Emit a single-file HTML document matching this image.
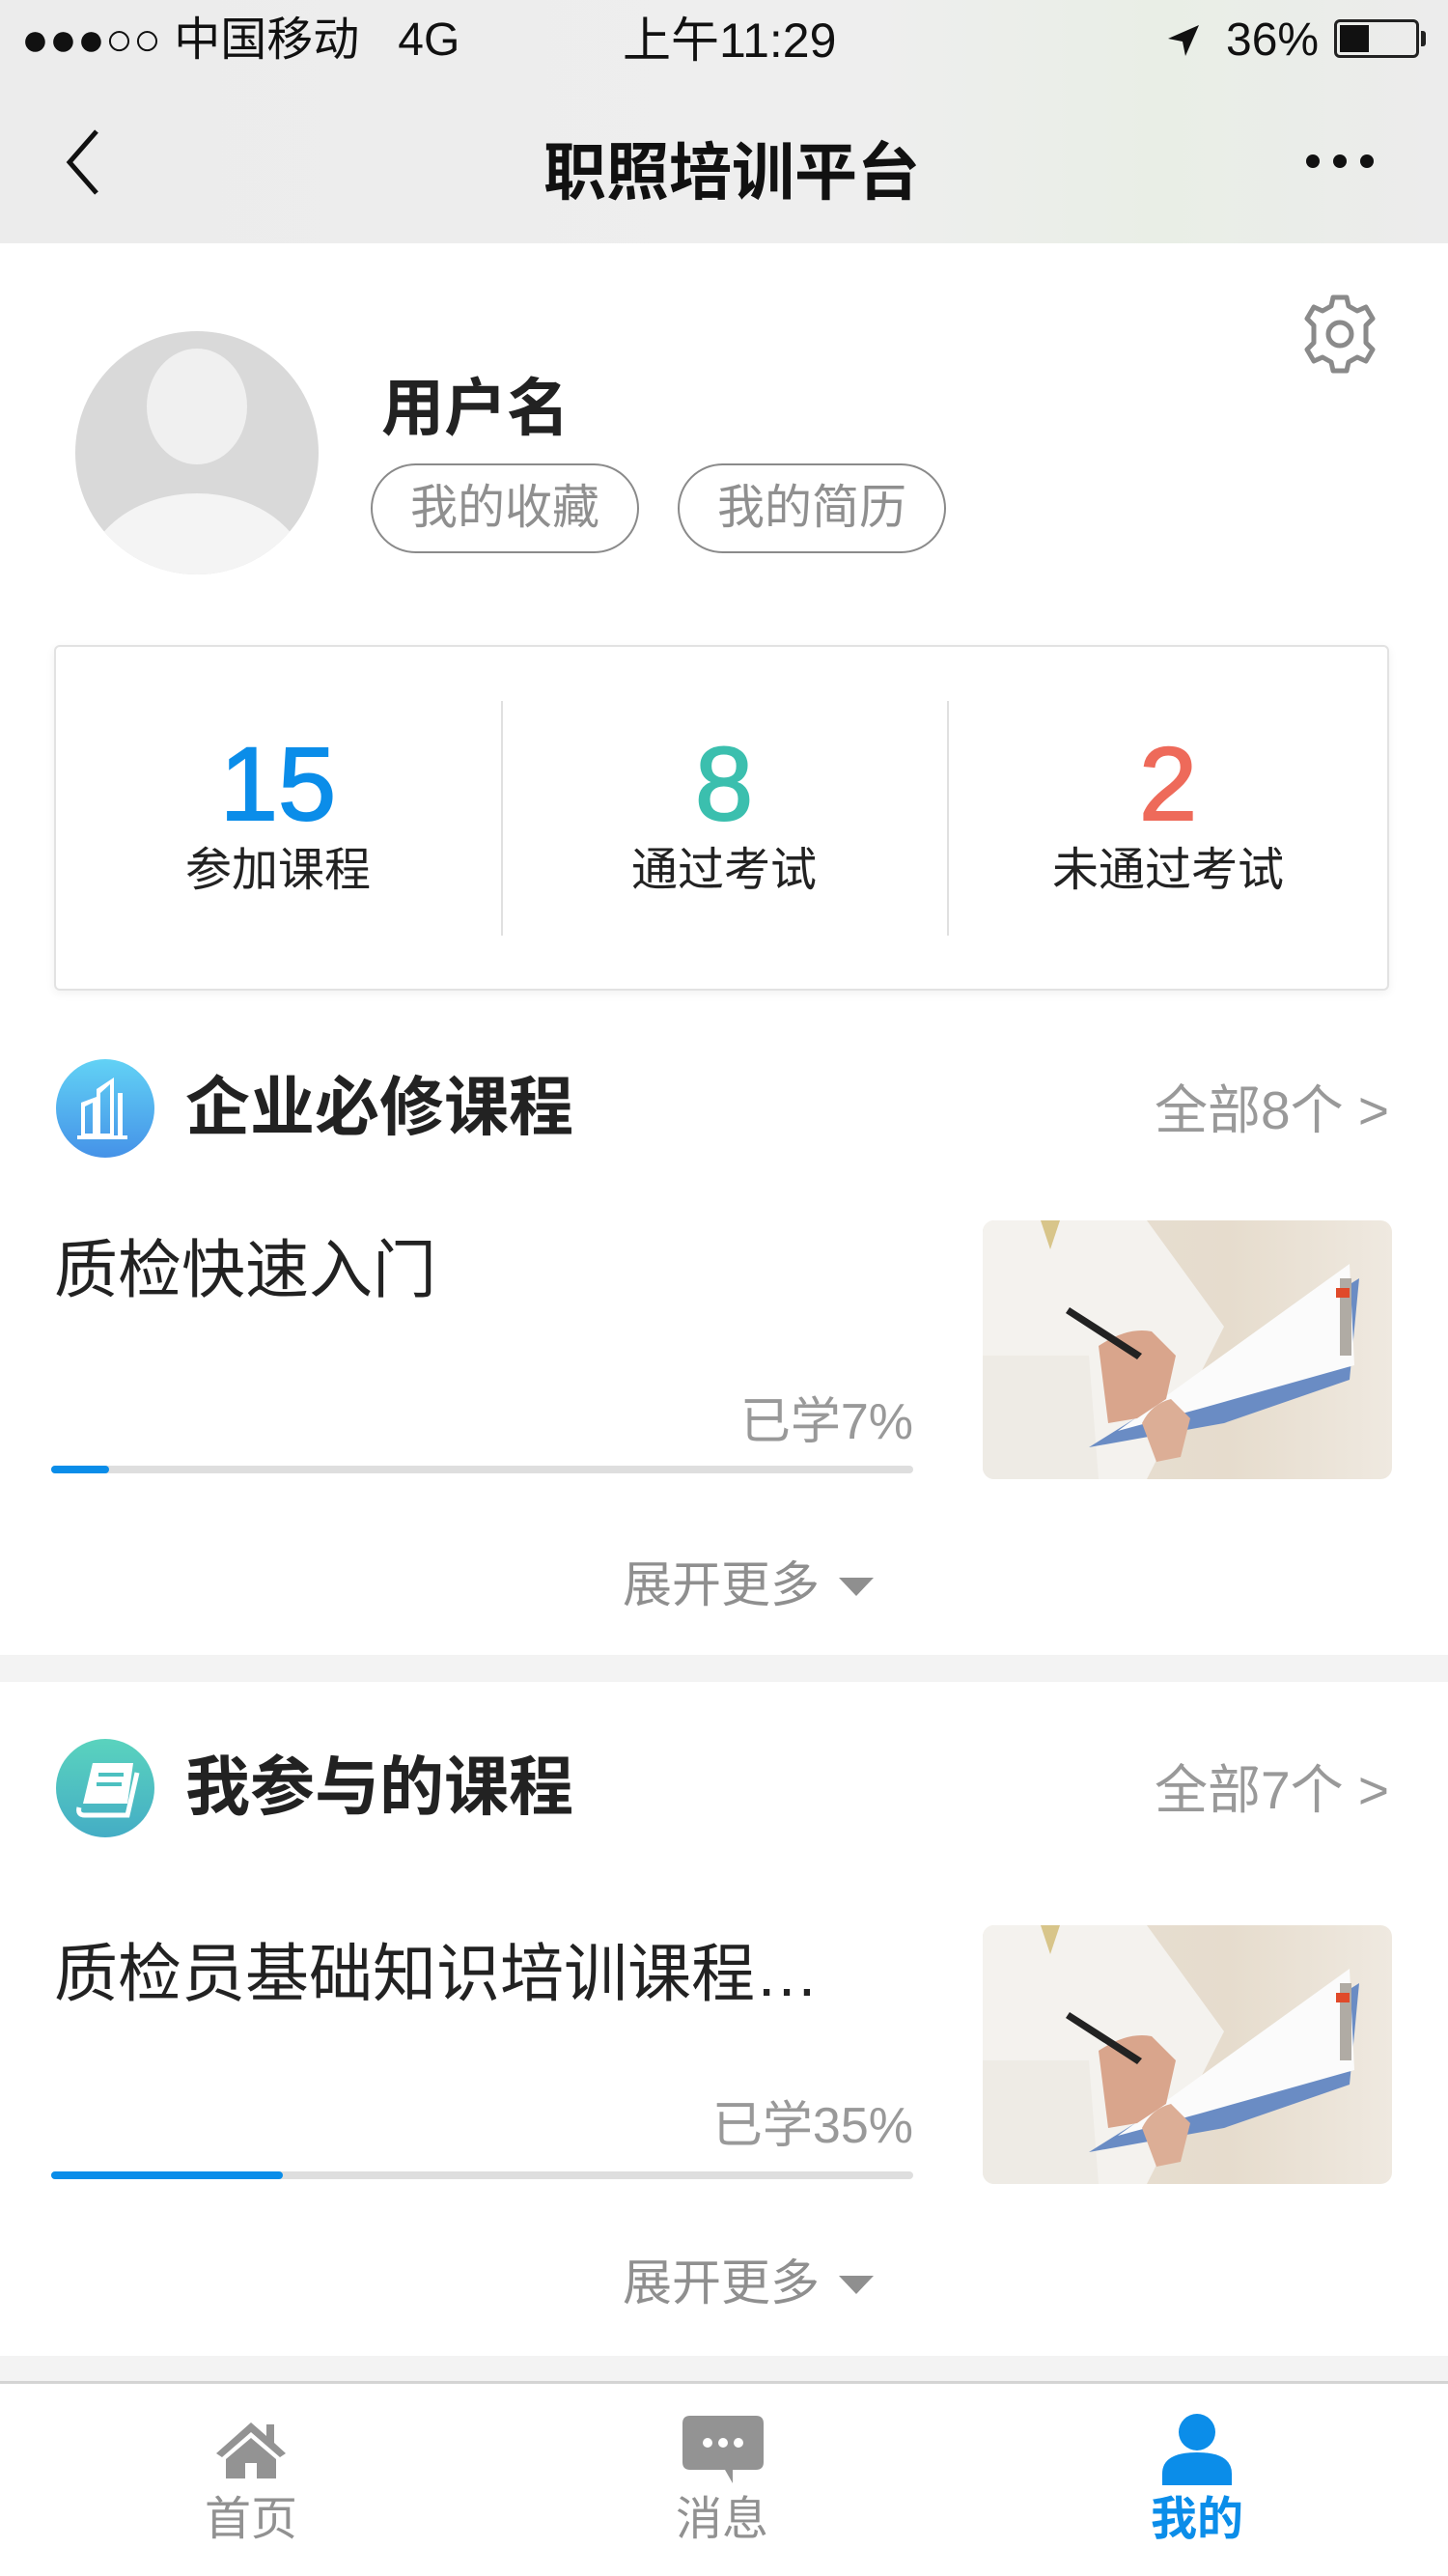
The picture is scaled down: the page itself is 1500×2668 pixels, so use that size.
<!DOCTYPE html>
<html><head><meta charset="utf-8">
<style>
*{margin:0;padding:0;box-sizing:border-box}
body{width:1500px;height:2668px;position:relative;background:#fff;font-family:"Liberation Sans","Noto Sans CJK SC",sans-serif;overflow:hidden}
.a{position:absolute;white-space:nowrap}
.hdr{position:absolute;left:0;top:0;width:1500px;height:252px;background:linear-gradient(90deg,#ececec 0%,#eeeeee 60%,#e9eee6 80%,#ececec 100%)}
.pill{position:absolute;top:480px;width:278px;height:93px;border:2px solid #8a8a8a;border-radius:47px;color:#8f8f8f;font-size:49px;line-height:89px;text-align:center}
.num{position:absolute;top:752px;width:300px;text-align:center;font-size:108px;line-height:120px;-webkit-text-stroke:2px currentColor}
.lbl{position:absolute;top:872px;width:300px;text-align:center;font-size:48px;line-height:60px;color:#222}
.sec{font-size:67px;font-weight:bold;color:#222;line-height:80px}
.all{font-size:55px;color:#999;line-height:70px}
.ct{font-size:66px;color:#222;line-height:80px}
.pct{font-size:52px;color:#999;line-height:64px}
.bar{position:absolute;left:53px;width:893px;height:8px;border-radius:4px;background:#dedede}
.bar i{position:absolute;left:0;top:0;height:8px;border-radius:4px;background:#0a8de9}
.more{font-size:51px;color:#8f8f8f;line-height:64px}
.tri{position:absolute;width:0;height:0;border-left:18px solid transparent;border-right:18px solid transparent;border-top:19px solid #8f8f8f}
.tab{position:absolute;top:2580px;width:200px;text-align:center;font-size:48px;line-height:60px;color:#919191}
</style></head><body>
<div class="hdr"></div>
<div class="a" style="left:22px;top:14px;font-size:48px;line-height:56px;color:#111">●●●○○ 中国移动 &nbsp; 4G</div>
<div class="a" style="left:645px;top:14px;font-size:50px;line-height:56px;color:#111">上午11:29</div>
<svg class="a" style="left:1208px;top:24px" width="36" height="36" viewBox="0 0 36 36"><path d="M34 2 L2 16 L17 19 L20 34 Z" fill="#111"/></svg>
<div class="a" style="left:1270px;top:14px;font-size:48px;line-height:56px;color:#111">36%</div>
<div class="a" style="left:1382px;top:20px;width:88px;height:40px;border:3px solid #222;border-radius:6px"><div style="position:absolute;left:3px;top:3px;width:30px;height:28px;background:#111"></div></div>
<div class="a" style="left:1472px;top:32px;width:5px;height:16px;background:#222;border-radius:0 3px 3px 0"></div>
<svg class="a" style="left:62px;top:132px" width="46" height="72" viewBox="0 0 46 72"><path d="M38 4 L10 36 L38 68" fill="none" stroke="#111" stroke-width="5"/></svg>
<div class="a" style="left:0;width:1516px;text-align:center;top:143px;font-size:65px;font-weight:bold;color:#111;line-height:72px">职照培训平台</div>
<div class="a" style="left:1353px;top:160px;width:14px;height:14px;border-radius:50%;background:#111"></div>
<div class="a" style="left:1381px;top:160px;width:14px;height:14px;border-radius:50%;background:#111"></div>
<div class="a" style="left:1409px;top:160px;width:14px;height:14px;border-radius:50%;background:#111"></div>
<svg class="a" style="left:1345px;top:303px" width="86" height="86" viewBox="-43 -43 86 86">
<g fill="none" stroke="#8a8a8a" stroke-width="5" stroke-linejoin="round">
<path d="M-7,-38 L7,-38 L9,-29 L18,-24 L27,-28 L34,-16 L27,-9 L27,9 L34,16 L27,28 L18,24 L9,29 L7,38 L-7,38 L-9,29 L-18,24 L-27,28 L-34,16 L-27,9 L-27,-9 L-34,-16 L-27,-28 L-18,-24 L-9,-29 Z"/>
<circle cx="0" cy="0" r="12"/></g></svg>
<div class="a" style="left:78px;top:343px;width:252px;height:252px;border-radius:50%;background:#d9d9d9;overflow:hidden">
<div style="position:absolute;left:74px;top:18px;width:104px;height:120px;border-radius:50%;background:#f0f0f0"></div>
<div style="position:absolute;left:10px;top:168px;width:232px;height:180px;border-radius:50%;background:#f4f4f4"></div>
</div>
<div class="a" style="left:395px;top:385px;font-size:65px;font-weight:bold;color:#222;line-height:76px">用户名</div>
<div class="pill" style="left:384px">我的收藏</div>
<div class="pill" style="left:702px">我的简历</div>
<div class="a" style="left:56px;top:668px;width:1383px;height:358px;border:2px solid #e2e2e2;border-radius:6px;box-shadow:0 3px 10px rgba(0,0,0,0.06);background:#fff"></div>
<div class="a" style="left:519px;top:726px;width:2px;height:243px;background:#e0e0e0"></div>
<div class="a" style="left:981px;top:726px;width:2px;height:243px;background:#e0e0e0"></div>
<div class="num" style="left:138px;color:#0b8de9">15</div>
<div class="num" style="left:600px;color:#3bbfae">8</div>
<div class="num" style="left:1060px;color:#ee6a5a">2</div>
<div class="lbl" style="left:138px">参加课程</div>
<div class="lbl" style="left:600px">通过考试</div>
<div class="lbl" style="left:1060px">未通过考试</div>
<div class="a" style="left:58px;top:1097px;width:102px;height:102px;border-radius:50%;background:linear-gradient(180deg,#62d2f5,#4592e8)"></div>
<svg class="a" style="left:78px;top:1112px" width="60" height="72" viewBox="0 0 60 72"><g fill="#fff"><path d="M22 16 L40 4 L40 66 L22 66 Z M26 20 L26 62 L36 62 L36 11 Z"/><path d="M6 30 L22 24 L22 66 L6 66 Z M10 34 L10 62 L18 62 L18 30 Z"/><rect x="2" y="64" width="52" height="4"/><rect x="44" y="20" width="5" height="46"/></g></svg>
<div class="a sec" style="left:192px;top:1108px">企业必修课程</div>
<div class="a all" style="right:61px;top:1115px">全部8个 &gt;</div>
<div class="a ct" style="left:56px;top:1275px">质检快速入门</div>
<svg class="a" style="left:1018px;top:1264px" width="424" height="268" viewBox="0 0 424 268"><use href="#pic"/></svg>
<div class="a pct" style="right:554px;top:1441px">已学7%</div>
<div class="bar" style="top:1518px"><i style="width:60px"></i></div>
<div class="a more" style="left:645px;top:1610px">展开更多</div>
<div class="tri" style="left:869px;top:1634px"></div>
<div class="a" style="left:0;top:1714px;width:1500px;height:28px;background:#f3f3f3"></div>
<div class="a" style="left:58px;top:1801px;width:102px;height:102px;border-radius:50%;background:linear-gradient(180deg,#5ad3be,#44adc5)"></div>
<svg class="a" style="left:76px;top:1822px" width="70" height="64" viewBox="0 0 70 64"><path d="M20 4 L62 4 L56 46 L10 46 Z" fill="#fff"/><path d="M6 50 Q4 58 12 58 L56 58 L66 14" fill="none" stroke="#fff" stroke-width="5"/><rect x="26" y="14" width="26" height="4" fill="#4cc0c0"/><rect x="24" y="24" width="26" height="4" fill="#4cc0c0"/></svg>
<div class="a sec" style="left:192px;top:1812px">我参与的课程</div>
<div class="a all" style="right:61px;top:1819px">全部7个 &gt;</div>
<div class="a ct" style="left:56px;top:2004px">质检员基础知识培训课程…</div>
<svg class="a" style="left:1018px;top:1994px" width="424" height="268" viewBox="0 0 424 268"><use href="#pic"/></svg>
<div class="a pct" style="right:554px;top:2170px">已学35%</div>
<div class="bar" style="top:2249px"><i style="width:240px"></i></div>
<div class="a more" style="left:645px;top:2333px">展开更多</div>
<div class="tri" style="left:869px;top:2357px"></div>
<div class="a" style="left:0;top:2440px;width:1500px;height:26px;background:#f3f3f3"></div>
<div class="a" style="left:0;top:2466px;width:1500px;height:3px;background:#d4d4d4"></div>
<svg class="a" style="left:220px;top:2505px" width="80" height="64" viewBox="0 0 80 64"><path d="M40 4 L4 36 L10 40 L40 14 L70 40 L76 36 L64 25 L64 6 L56 6 L56 18 Z" fill="#939393"/><path d="M40 20 L14 42 L14 62 L34 62 L34 46 L46 46 L46 62 L66 62 L66 42 Z" fill="#939393"/></svg>
<svg class="a" style="left:707px;top:2502px" width="84" height="72" viewBox="0 0 84 72"><path d="M8 0 L76 0 Q84 0 84 8 L84 48 Q84 56 76 56 L52 56 L52 70 L44 56 L8 56 Q0 56 0 48 L0 8 Q0 0 8 0 Z" fill="#939393"/><circle cx="26" cy="28" r="5" fill="#fff"/><circle cx="42" cy="28" r="5" fill="#fff"/><circle cx="58" cy="28" r="5" fill="#fff"/></svg>
<svg class="a" style="left:1202px;top:2500px" width="76" height="74" viewBox="0 0 76 74"><ellipse cx="38" cy="19" rx="19" ry="19" fill="#0b8de9"/><path d="M2 74 L2 62 Q2 40 38 40 Q74 40 74 62 L74 74 Z" fill="#0b8de9"/></svg>
<div class="tab" style="left:160px">首页</div>
<div class="tab" style="left:648px">消息</div>
<div class="tab" style="left:1140px;color:#0b8de9;font-weight:bold">我的</div>
<svg width="0" height="0" style="position:absolute"><defs>
<clipPath id="rc"><rect width="424" height="268" rx="12"/></clipPath>
<linearGradient id="bg" x1="0" y1="0" x2="1" y2="0"><stop offset="0" stop-color="#e8e0d4"/><stop offset="0.6" stop-color="#e6dccd"/><stop offset="1" stop-color="#efe9e0"/></linearGradient>
<g id="pic" clip-path="url(#rc)">
<rect width="424" height="268" fill="url(#bg)"/>
<path d="M0 0 L170 0 L250 110 L170 268 L0 268 Z" fill="#f4f2ee"/>
<path d="M0 140 L110 140 L120 268 L0 268 Z" fill="#eeebe5"/>
<path d="M60 0 L70 30 L80 0 Z" fill="#d8c58a"/>
<path d="M110 235 L390 60 L380 165 L250 210 Z" fill="#6a8cc4"/>
<path d="M140 218 L380 45 L385 150 L225 195 Z" fill="#fbfbfb"/>
<rect x="370" y="60" width="12" height="80" fill="#b0aba4"/>
<rect x="366" y="70" width="14" height="10" fill="#e04a2a"/>
<path d="M120 130 Q150 110 175 115 L200 140 L190 185 L160 205 L130 210 Z" fill="#d9a58c"/>
<path d="M165 210 Q175 190 195 185 L215 205 L205 245 L180 250 Z" fill="#dcae96"/>
<path d="M90 90 L165 138 L160 144 L86 96 Z" fill="#222"/>
</g></defs></svg>
</body></html>
